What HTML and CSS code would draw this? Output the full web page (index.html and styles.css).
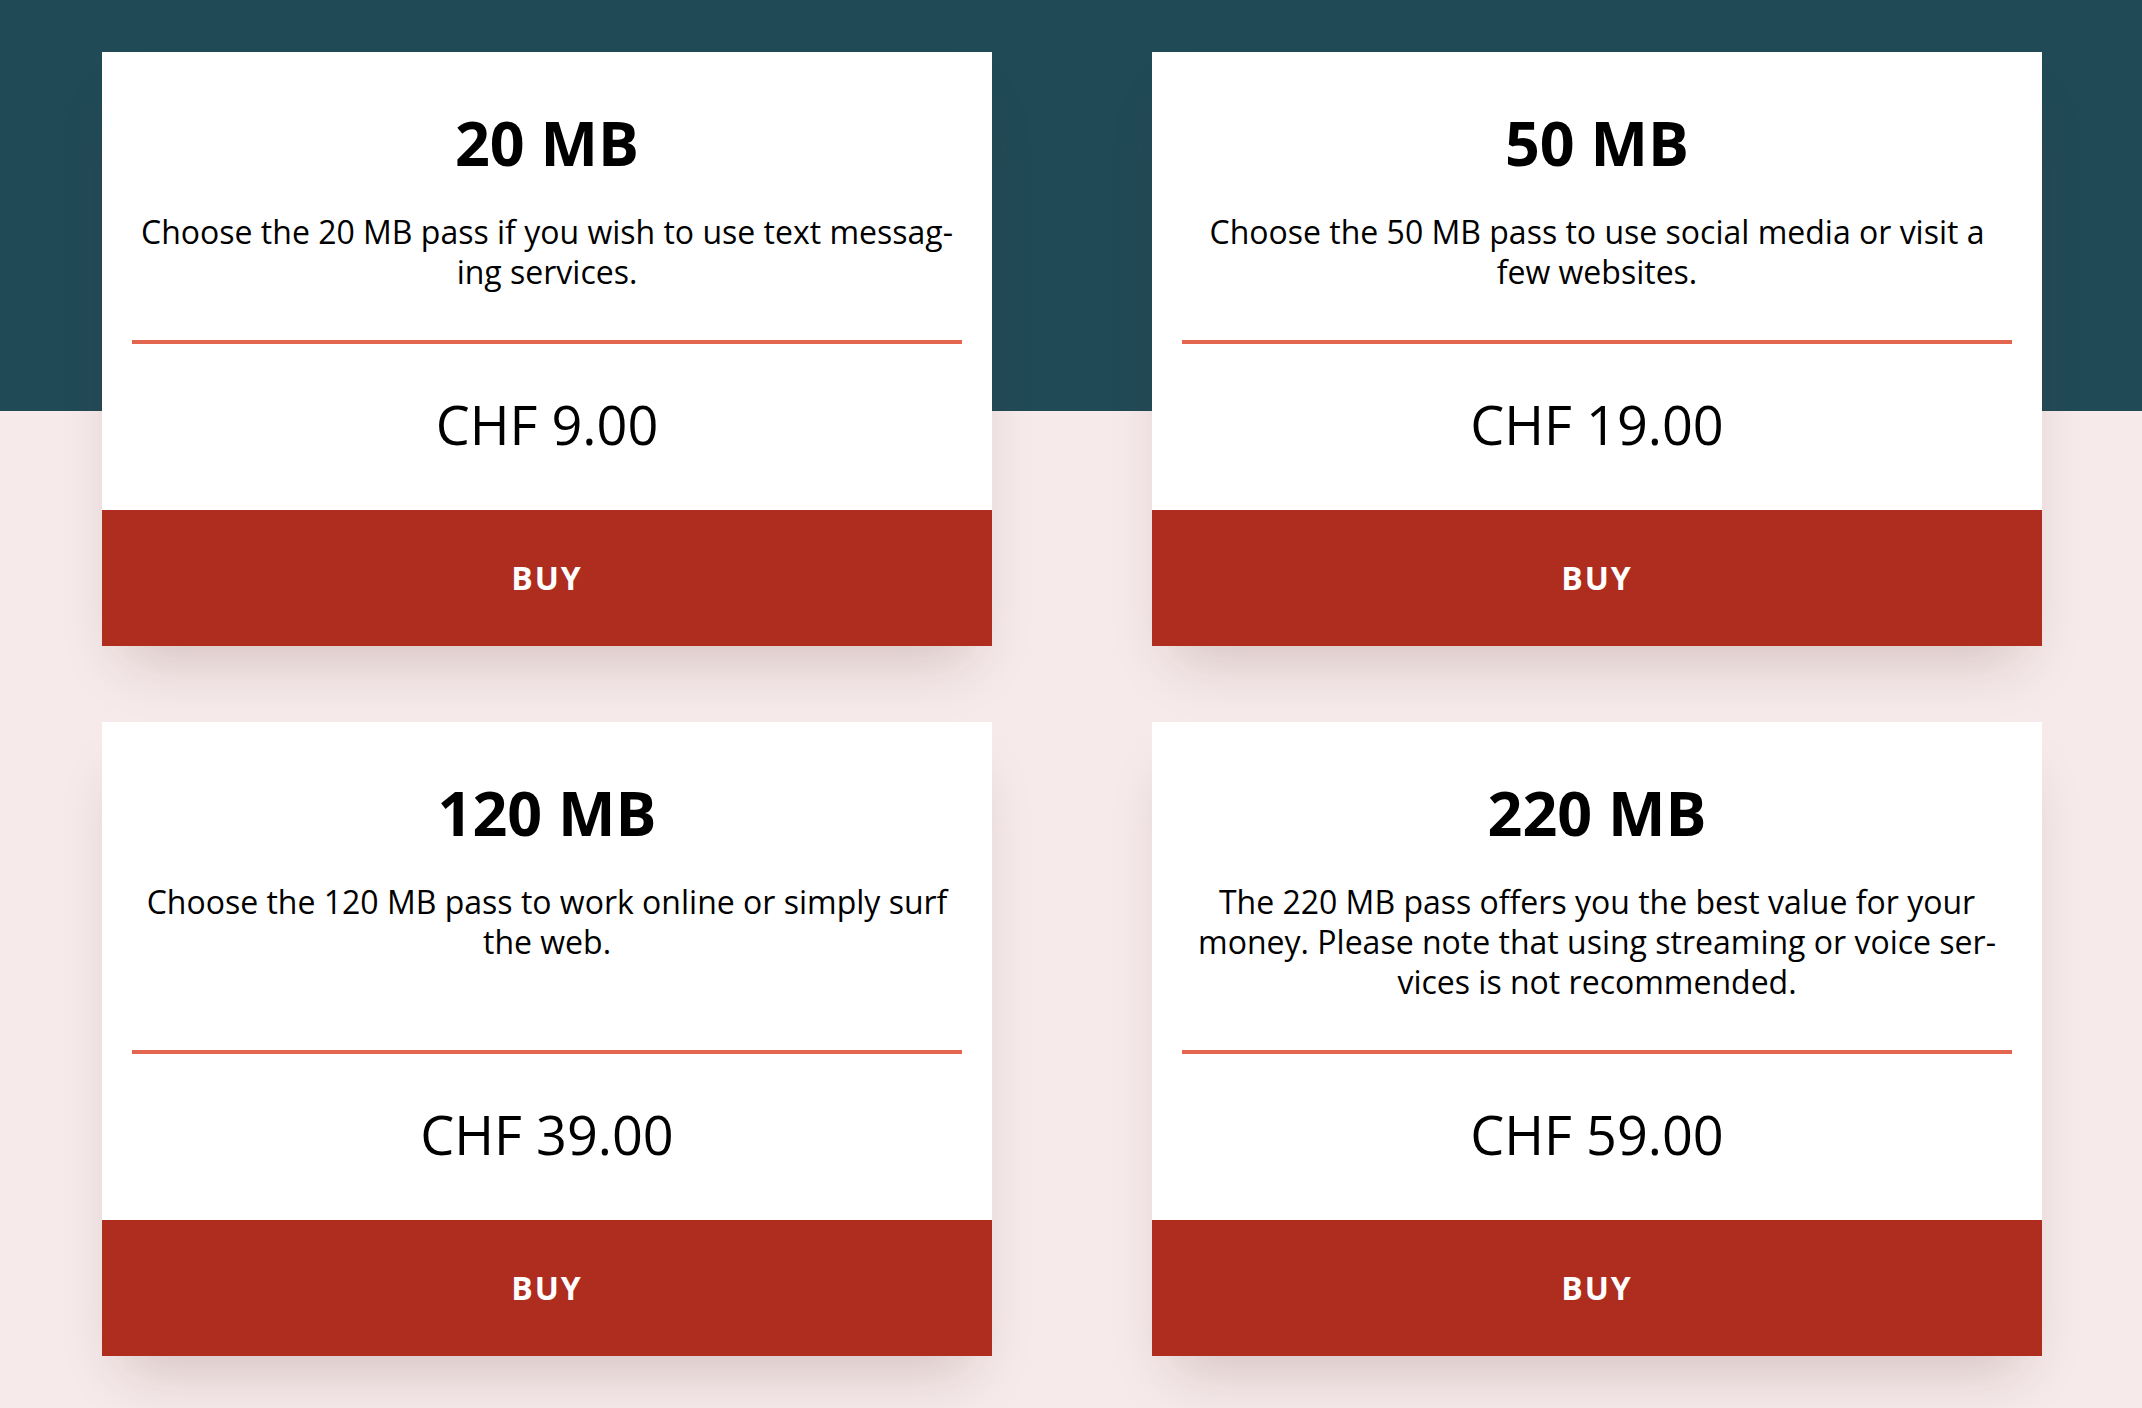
FILE: index.html
```html
<html lang="en">
	<head>
		<meta charset="utf-8">
		<title>Data passes</title>
		<link rel="stylesheet" href="styles.css">
	</head>
	<body>
		<div class="page">
			<div class="pass-grid">
				<div class="pass-card">
					<h2 class="pass-title">20 MB</h2>
					<p class="pass-text">Choose the 20 MB pass if you wish to use text messag&shy;ing services.</p>
					<div class="pass-divider"></div>
					<div class="pass-price">CHF 9.00</div>
					<a class="pass-buy" href="javascript:void(0);">Buy</a>
				</div>
				<div class="pass-card">
					<h2 class="pass-title">50 MB</h2>
					<p class="pass-text">Choose the 50 MB pass to use social media or visit a few websites.</p>
					<div class="pass-divider"></div>
					<div class="pass-price">CHF 19.00</div>
					<a class="pass-buy" href="javascript:void(0);">Buy</a>
				</div>
				<div class="pass-card">
					<h2 class="pass-title">120 MB</h2>
					<p class="pass-text">Choose the 120 MB pass to work online or simply surf the web.</p>
					<div class="pass-divider"></div>
					<div class="pass-price">CHF 39.00</div>
					<a class="pass-buy" href="javascript:void(0);">Buy</a>
				</div>
				<div class="pass-card">
					<h2 class="pass-title">220 MB</h2>
					<p class="pass-text">The 220 MB pass offers you the best value for your money. Please note that using streaming or voice ser&shy;vices is not recommended.</p>
					<div class="pass-divider"></div>
					<div class="pass-price">CHF 59.00</div>
					<a class="pass-buy" href="javascript:void(0);">Buy</a>
				</div>
			</div>
		</div>
	</body>
</html>
```

FILE: styles.css
```css
* {
	margin: 0;
	padding: 0;
	box-sizing: border-box;
}
body {
	font-family: "Open Sans", "Liberation Sans", sans-serif;
	color: #000;
	background-color: #f6eaea;
}
.page {
	min-height: 1408px;
	padding: 52px 0 40px 2px;
	/* dark band behind the top half of the first row */
	background: linear-gradient(#214a57 0, #214a57 411px, #f6eaea 411px);
}
.pass-grid {
	width: 1940px;
	margin: 0 auto;
	display: grid;
	grid-template-columns: 1fr 1fr;
	column-gap: 160px;
	row-gap: 76px;
}
.pass-card {
	display: flex;
	flex-direction: column;
	background-color: #fff;
	box-shadow: 0 34px 56px -22px rgba(90, 40, 40, 0.22);
}
.pass-title {
	padding: 55px 30px 0;
	font-size: 61px;
	line-height: 72px;
	font-weight: 700;
	text-align: center;
}
.pass-text {
	flex: 1;
	padding: 33px 30px 48px;
	font-size: 32px;
	line-height: 40px;
	text-align: center;
}
.pass-divider {
	height: 4px;
	margin: 0 30px;
	background-color: #e4664f;
}
.pass-price {
	padding: 42px 30px 48px;
	font-size: 54px;
	line-height: 76px;
	text-align: center;
}
.pass-buy {
	display: block;
	padding: 46px 0;
	background-color: #ae2d1e;
	color: #fff;
	font-size: 32px;
	line-height: 44px;
	font-weight: 700;
	letter-spacing: 2px;
	text-align: center;
	text-transform: uppercase;
	text-decoration: none;
}
```
